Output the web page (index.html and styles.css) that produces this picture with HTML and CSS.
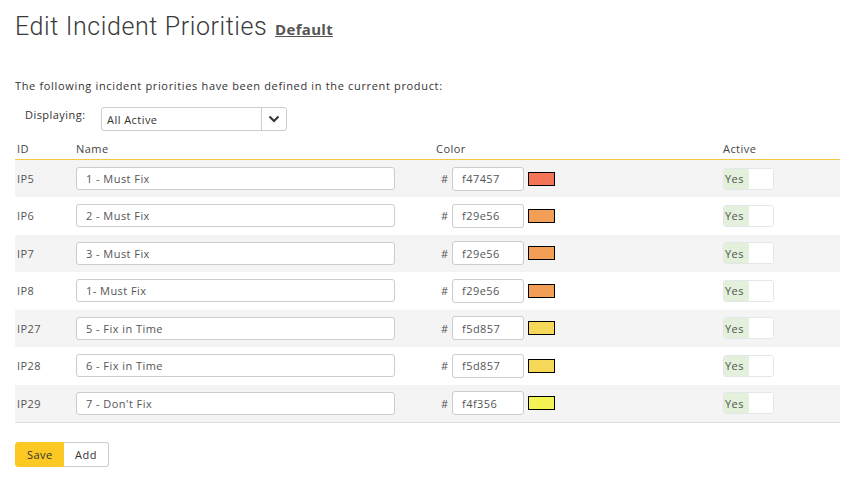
FILE: index.html
```html
<!DOCTYPE html>
<html>
<head>
<meta charset="utf-8">
<link rel="stylesheet" href="styles.css">
</head>
<body>
<div class="page">
  <h1 class="title">Edit Incident Priorities <a class="product" href="#">Default</a></h1>
  <p class="intro">The following incident priorities have been defined in the current product:</p>
  <div class="filter">
    <span class="filter-label">Displaying:</span>
    <div class="select">
      <span class="select-value">All Active</span>
      <span class="select-btn"><svg width="12" height="8" viewBox="0 0 12 8"><path d="M1.5 1.5 L6 6 L10.5 1.5" fill="none" stroke="#333" stroke-width="2"/></svg></span>
    </div>
  </div>
  <table class="grid">
    <thead>
      <tr>
        <th class="c-id">ID</th>
        <th class="c-name">Name</th>
        <th class="c-color">Color</th>
        <th class="c-active">Active</th>
      </tr>
    </thead>
    <tbody>
      <tr><td class="c-id">IP5</td><td class="c-name"><input class="name-input" value="1 - Must Fix"></td><td class="c-color"><span class="hash">#</span><input class="color-input" value="f47457"><span class="swatch" style="background:#f47457"></span></td><td class="c-active"><span class="toggle"><span class="yes">Yes</span><span class="no"></span></span></td></tr>
      <tr><td class="c-id">IP6</td><td class="c-name"><input class="name-input" value="2 - Must Fix"></td><td class="c-color"><span class="hash">#</span><input class="color-input" value="f29e56"><span class="swatch" style="background:#f29e56"></span></td><td class="c-active"><span class="toggle"><span class="yes">Yes</span><span class="no"></span></span></td></tr>
      <tr><td class="c-id">IP7</td><td class="c-name"><input class="name-input" value="3 - Must Fix"></td><td class="c-color"><span class="hash">#</span><input class="color-input" value="f29e56"><span class="swatch" style="background:#f29e56"></span></td><td class="c-active"><span class="toggle"><span class="yes">Yes</span><span class="no"></span></span></td></tr>
      <tr><td class="c-id">IP8</td><td class="c-name"><input class="name-input" value="1- Must Fix"></td><td class="c-color"><span class="hash">#</span><input class="color-input" value="f29e56"><span class="swatch" style="background:#f29e56"></span></td><td class="c-active"><span class="toggle"><span class="yes">Yes</span><span class="no"></span></span></td></tr>
      <tr><td class="c-id">IP27</td><td class="c-name"><input class="name-input" value="5 - Fix in Time"></td><td class="c-color"><span class="hash">#</span><input class="color-input" value="f5d857"><span class="swatch" style="background:#f5d857"></span></td><td class="c-active"><span class="toggle"><span class="yes">Yes</span><span class="no"></span></span></td></tr>
      <tr><td class="c-id">IP28</td><td class="c-name"><input class="name-input" value="6 - Fix in Time"></td><td class="c-color"><span class="hash">#</span><input class="color-input" value="f5d857"><span class="swatch" style="background:#f5d857"></span></td><td class="c-active"><span class="toggle"><span class="yes">Yes</span><span class="no"></span></span></td></tr>
      <tr><td class="c-id">IP29</td><td class="c-name"><input class="name-input" value="7 - Don't Fix"></td><td class="c-color"><span class="hash">#</span><input class="color-input" value="f4f356"><span class="swatch" style="background:#f4f356"></span></td><td class="c-active"><span class="toggle"><span class="yes">Yes</span><span class="no"></span></span></td></tr>
    </tbody>
  </table>
  <div class="actions">
    <button class="btn btn-primary">Save</button><button class="btn">Add</button>
  </div>
</div>
</body>
</html>
```

FILE: styles.css
```css
html, body {
  margin: 0;
  padding: 0;
  background: #fff;
}
body {
  font-family: "Open Sans", "Liberation Sans", Arial, sans-serif;
  font-size: 11px;
  letter-spacing: 0.45px;
  color: #333;
}
.page {
  padding: 10px 11px 0 15px;
}
.title {
  margin: 0;
  font-family: "Roboto", "Liberation Sans", sans-serif;
  font-weight: 300;
  font-size: 25px;
  line-height: 34px;
  color: #3a3a3a;
  letter-spacing: 0.6px;
}
.product {
  font-family: "Open Sans", "Liberation Sans", sans-serif;
  font-weight: bold;
  font-size: 15px;
  color: #555;
  text-decoration: underline;
  letter-spacing: 0.3px;
  margin-left: 1px;
}
.intro {
  margin: 32px 0 0 0;
  line-height: 16px;
  color: #333;
  letter-spacing: 0.66px;
}
.filter {
  display: flex;
  align-items: center;
  margin-top: 13px;
  padding-left: 10px;
}
.filter-label {
  width: 76px;
  margin-top: -10px;
  color: #333;
}
.select {
  display: flex;
  width: 184px;
  height: 22px;
  border: 1px solid #ccc;
  border-radius: 3px;
  align-items: center;
}
.select-value {
  flex: 1;
  padding-left: 5px;
  padding-top: 1px;
}
.select-btn {
  width: 24px;
  height: 22px;
  border-left: 1px solid #ccc;
  display: flex;
  align-items: center;
  justify-content: center;
}
.grid {
  width: 825px;
  border-collapse: collapse;
  margin-top: 7px;
  table-layout: fixed;
}
.grid th {
  text-align: left;
  font-weight: normal;
  color: #444;
  height: 21px;
  padding: 0 0 0 2px;
  border-bottom: 1px solid #f5c842;
}
.grid td {
  height: 37.5px;
  padding: 0 0 0 2px;
  color: #555;
  box-sizing: border-box;
}
.grid tbody tr:nth-child(odd) td {
  background: #f4f4f4;
}
.grid tbody tr:last-child td {
  border-bottom: 1px solid #ddd;
}
.c-id { width: 57px; }
.c-name { width: 358px; }
.c-color { width: 285px; }
.grid td.c-color { padding-left: 7px; }
.name-input {
  box-sizing: border-box;
  width: 319px;
  height: 23px;
  border: 1px solid #ccc;
  border-radius: 3px;
  padding: 0 9px;
  font-family: inherit;
  font-size: 11px;
  letter-spacing: 0.45px;
  color: #555;
  background: #fff;
  vertical-align: middle;
}
.hash {
  display: inline-block;
  width: 11px;
  color: #555;
  vertical-align: middle;
}
.color-input {
  box-sizing: border-box;
  width: 72px;
  height: 24px;
  border: 1px solid #ccc;
  border-radius: 3px;
  padding: 0 9px;
  font-family: inherit;
  font-size: 11px;
  letter-spacing: 0.45px;
  color: #555;
  background: #fff;
  vertical-align: middle;
}
.swatch {
  display: inline-block;
  box-sizing: border-box;
  width: 27px;
  height: 14px;
  border: 1px solid #000;
  margin-left: 4px;
  vertical-align: middle;
}
.toggle {
  display: inline-flex;
  box-sizing: border-box;
  width: 51px;
  height: 22px;
  border: 1px solid #e6e6e6;
  border-radius: 3px;
  overflow: hidden;
  vertical-align: middle;
  background: #fff;
}
.toggle .yes {
  width: 24px;
  background: #e2f0dc;
  color: #555;
  display: flex;
  align-items: center;
  padding-left: 1px;
}
.toggle .no {
  flex: 1;
  background: #fff;
}
.actions {
  margin-top: 19px;
  display: flex;
}
.btn {
  box-sizing: border-box;
  height: 25px;
  border: 1px solid #ccc;
  background: #fff;
  font-family: inherit;
  font-size: 11px;
  letter-spacing: 0.45px;
  color: #333;
  padding: 0 11px;
  margin: 0;
}
.btn:first-child {
  border-radius: 3px 0 0 3px;
}
.btn:last-child {
  border-radius: 0 3px 3px 0;
  border-left: none;
  width: 45px;
}
.btn-primary {
  width: 49px;
  background: #fcc823;
  border-color: #fcc823;
}
```
